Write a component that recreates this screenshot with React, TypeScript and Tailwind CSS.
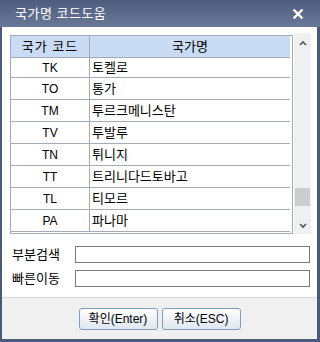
import React from "react";

const rows: [string, string][] = [
  ["TK", "토켈로"],
  ["TO", "통가"],
  ["TM", "투르크메니스탄"],
  ["TV", "투발루"],
  ["TN", "튀니지"],
  ["TT", "트리니다드토바고"],
  ["TL", "티모르"],
  ["PA", "파나마"],
];

const font = { fontFamily: '"Liberation Sans", "Noto Sans CJK KR", sans-serif' };

export default function App() {
  return (
    <div
      className="w-[320px] h-[342px] bg-[#4b5a7b] flex flex-col text-[12px] text-black"
      style={font}
    >
      {/* Title bar */}
      <div className="h-[27px] flex items-center justify-between pl-[15px] pr-[16px] bg-gradient-to-b from-[#4e5d7e] to-[#6a7898]">
        <span className="text-white text-[13px] leading-none tracking-[0.5px]">국가명 코드도움</span>
        <svg width="12" height="12" viewBox="0 0 12 12">
          <path d="M1.5 1.5 L10.5 10.5 M10.5 1.5 L1.5 10.5" stroke="#fff" strokeWidth="2.4" />
        </svg>
      </div>
      {/* Body */}
      <div className="flex-1 ml-[2px] mr-[3px] mb-[3px] flex flex-col bg-white">
        <div className="pt-[6px] pl-[8px] pr-[5px] flex">
          {/* table */}
          <div className="mt-[2px] w-[283px] h-[199px] border border-[#a4abbb] pr-[2px] pb-[1px] flex flex-col">
            <div className="h-[22px] flex bg-[#cadcf3] border-b border-[#a4abbb] text-[13px]">
              <div className="w-[79px] border-r border-[#a4abbb] flex items-center justify-center tracking-[1px]">국가 코드</div>
              <div className="flex-1 flex items-center justify-center">국가명</div>
            </div>
            {rows.map(([c, n], i) => (
              <div
                key={c}
                className={`${i === 0 ? "h-[20px]" : "h-[22px]"} flex border-b border-[#a4abbb]`}
              >
                <div className="w-[79px] border-r border-[#a4abbb] flex items-center justify-center">{c}</div>
                <div className="flex-1 flex items-center pl-[2px] text-[13px]">{n}</div>
              </div>
            ))}
          </div>
          {/* scrollbar */}
          <div className="ml-[1px] w-[17px] h-[201px] bg-[#f0f0f0] flex flex-col items-center justify-between pt-[7px] pb-[5px] relative">
            <svg width="8" height="6" viewBox="0 0 8 6">
              <path d="M1 5 L4 2 L7 5" stroke="#555" strokeWidth="1.6" fill="none" />
            </svg>
            <div className="absolute left-[1px] top-[155px] w-[15px] h-[18px] bg-[#cdcdcd]" />
            <svg width="8" height="6" viewBox="0 0 8 6">
              <path d="M1 1 L4 4 L7 1" stroke="#555" strokeWidth="1.6" fill="none" />
            </svg>
          </div>
        </div>
        <div className="mt-[12px] pl-[10px] flex items-center h-[17px] text-[13px]">
          <span className="w-[63px]">부분검색</span>
          <div className="w-[235px] h-[17px] border border-[#7a7a7a] bg-white" />
        </div>
        <div className="mt-[7px] pl-[10px] flex items-center h-[17px] text-[13px]">
          <span className="w-[63px]">빠른이동</span>
          <div className="w-[235px] h-[17px] border border-[#7a7a7a] bg-white" />
        </div>
        <div className="mt-[10px] flex-1 bg-[#f0f0f0] border-t border-[#d6d6d6] flex justify-center items-start pt-[10px] gap-[4px]">
          <button className="w-[79px] h-[22px] rounded-[3px] border border-[#7f9db9] bg-gradient-to-b from-[#ffffff] to-[#dfe7f1] text-[12px] flex items-center justify-center">
            확인(Enter)
          </button>
          <button className="w-[79px] h-[22px] rounded-[3px] border border-[#7f9db9] bg-gradient-to-b from-[#ffffff] to-[#dfe7f1] text-[12px] flex items-center justify-center">
            취소(ESC)
          </button>
        </div>
      </div>
    </div>
  );
}
